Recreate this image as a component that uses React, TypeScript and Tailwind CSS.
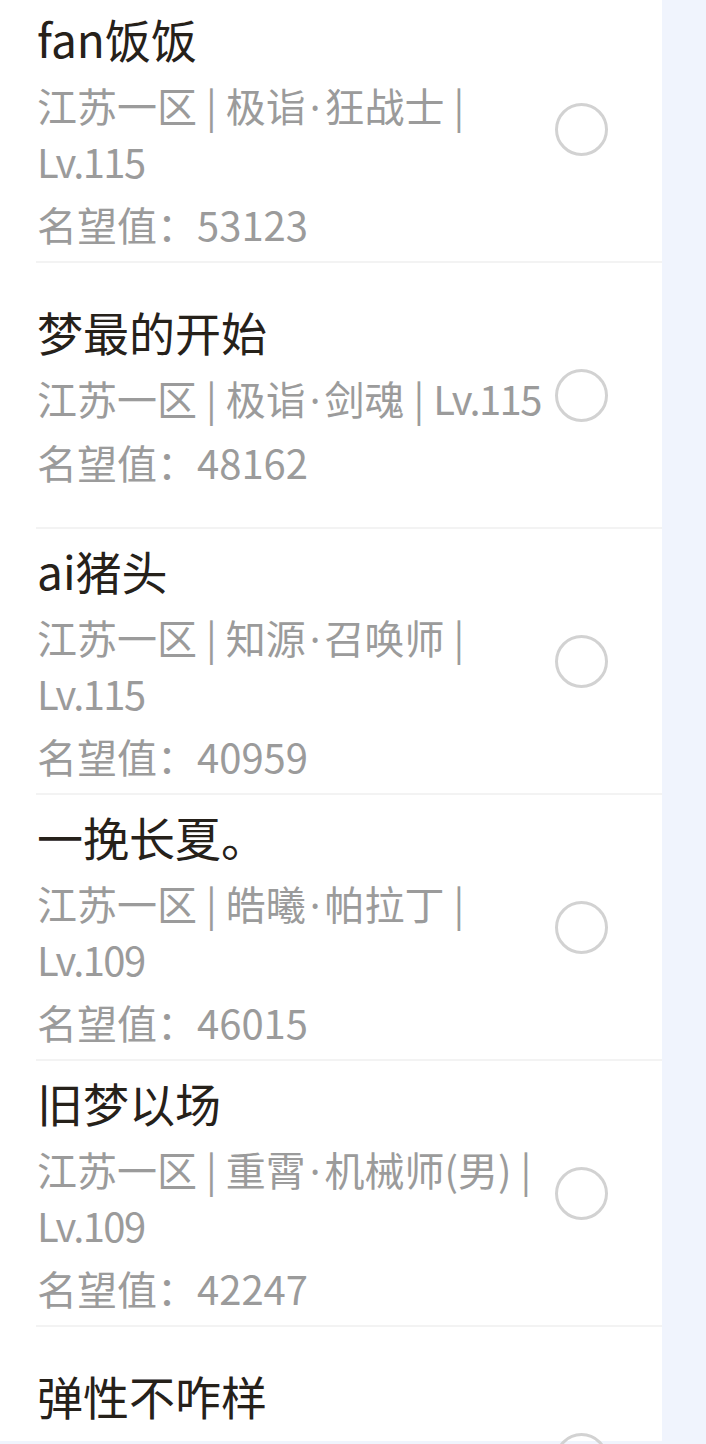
import React from "react";

type Role = {
  name: string;
  server: string;
  title: string;
  job: string;
  level: string;
  fame: string;
};

const roles: Role[] = [
  { name: "fan饭饭", server: "江苏一区", title: "极诣", job: "狂战士", level: "Lv.115", fame: "53123" },
  { name: "梦最的开始", server: "江苏一区", title: "极诣", job: "剑魂", level: "Lv.115", fame: "48162" },
  { name: "ai猪头", server: "江苏一区", title: "知源", job: "召唤师", level: "Lv.115", fame: "40959" },
  { name: "一挽长夏。", server: "江苏一区", title: "皓曦", job: "帕拉丁", level: "Lv.109", fame: "46015" },
  { name: "旧梦以场", server: "江苏一区", title: "重霄", job: "机械师(男)", level: "Lv.109", fame: "42247" },
  { name: "弹性不咋样", server: "江苏一区", title: "极诣", job: "漫游", level: "Lv.115", fame: "41038" },
];

function RoleRow({ role }: { role: Role }) {
  return (
    <div className="ml-[36px] h-[266px] flex items-center border-b-2 border-[#f3f3f3]">
      {/* name + server info */}
      <div className="w-[519px] pl-px pt-[3px] flex flex-col">
        <div className="text-[46px] leading-[56px] text-[#26211a]">{role.name}</div>
        <div className="mt-3 text-[40px] leading-[55px] text-[#9b9b9b]">
          {role.server} | {role.title}
          <span className="px-1 font-['Noto_Sans']">·</span>
          {role.job} | <span className="tracking-[-0.04em]">{role.level}</span>
        </div>
        <div className="mt-2 text-[40px] leading-[55px] text-[#9b9b9b]">名望值：{role.fame}</div>
      </div>
      {/* radio */}
      <div className="w-[53px] h-[53px] rounded-full border-[3px] border-[#d2d2d2] shrink-0" />
    </div>
  );
}

export default function App() {
  return (
    <div
      className="w-[706px] h-[1444px] overflow-hidden bg-[#f0f4fd]"
      style={{ fontFamily: '"Noto Sans CJK SC", "Noto Sans", sans-serif' }}
    >
      <div className="w-[662px] h-full bg-white">
        <div className="-mt-[3px]">
          {roles.map((r) => (
            <RoleRow key={r.name} role={r} />
          ))}
        </div>
      </div>
    </div>
  );
}
